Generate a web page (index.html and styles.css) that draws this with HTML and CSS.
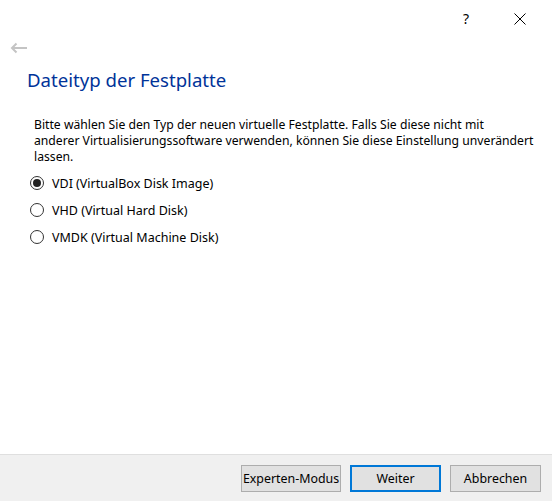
FILE: index.html
```html
<!DOCTYPE html>
<html lang="de">
<head>
<meta charset="utf-8">
<title>Dateityp der Festplatte</title>
<link rel="stylesheet" href="styles.css">
</head>
<body>
<div class="dialog">
  <div class="titlebar">
    <span class="help">?</span>
    <svg class="close" width="12" height="12" viewBox="0 0 12 12"><path d="M0.5 0.5 L11.5 11.5 M11.5 0.5 L0.5 11.5" stroke="#000" stroke-width="1" fill="none"/></svg>
  </div>
  <div class="backrow">
    <svg class="back" width="18" height="12" viewBox="0 0 18 12"><path d="M17 6 H2 M6.5 1.5 L2 6 L6.5 10.5" stroke="#c4c4c4" stroke-width="2" fill="none"/></svg>
  </div>
  <div class="content">
    <h1 class="title">Dateityp der Festplatte</h1>
    <p class="desc">Bitte wählen Sie den Typ der neuen virtuelle Festplatte. Falls Sie diese nicht mit<br>anderer Virtualisierungssoftware verwenden, können Sie diese Einstellung unverändert<br>lassen.</p>
    <div class="options">
      <label class="option"><span class="radio checked"></span>VDI (VirtualBox Disk Image)</label>
      <label class="option"><span class="radio"></span>VHD (Virtual Hard Disk)</label>
      <label class="option"><span class="radio"></span>VMDK (Virtual Machine Disk)</label>
    </div>
  </div>
  <div class="footer">
    <button class="btn wide">Experten-Modus</button>
    <button class="btn default">Weiter</button>
    <button class="btn">Abbrechen</button>
  </div>
</div>
</body>
</html>
```
FILE: styles.css
```css
html, body {
  margin: 0;
  padding: 0;
  background: #fff;
}
.dialog {
  width: 552px;
  height: 501px;
  display: flex;
  flex-direction: column;
  font-family: "Noto Sans", "Open Sans", sans-serif;
  font-size: 12.2px;
  color: #000;
}
.titlebar {
  height: 38px;
  display: flex;
  align-items: center;
  justify-content: flex-end;
  padding-right: 26px;
  gap: 45px;
}
.help {
  font-size: 14px;
  line-height: 14px;
  margin-top: -1px;
}
.close {
  display: block;
}
.backrow {
  height: 19px;
  padding-left: 10px;
  display: flex;
  align-items: center;
}
.back { display: block; }
.content {
  flex: 1;
  padding: 0 8px 0 27px;
}
.title {
  margin: 11px 0 0 0;
  font-size: 18.6px;
  font-weight: normal;
  color: #003399;
  line-height: 24px;
}
.desc {
  margin: 25px 0 0 7px;
  line-height: 16px;
  white-space: nowrap;
}
.options {
  margin: 8px 0 0 3px;
  display: flex;
  flex-direction: column;
  gap: 7px;
}
.option {
  display: flex;
  align-items: center;
  height: 20px;
  gap: 8px;
  font-size: 12.5px;
}
.radio {
  width: 14px;
  height: 14px;
  border: 1px solid #333;
  border-radius: 50%;
  box-sizing: border-box;
  display: flex;
  align-items: center;
  justify-content: center;
}
.radio.checked::after {
  content: "";
  width: 8px;
  height: 8px;
  border-radius: 50%;
  background: #222;
}
.footer {
  height: 46px;
  border-top: 1px solid #dfdfdf;
  background: #f0f0f0;
  display: flex;
  justify-content: flex-end;
  align-items: center;
  gap: 9px;
  padding-right: 11px;
}
.btn {
  font-family: "Noto Sans", "Open Sans", sans-serif;
  font-size: 12.4px;
  color: #000;
  background: #e1e1e1;
  border: 1px solid #adadad;
  height: 27px;
  width: 91px;
  padding: 0;
  margin: 0;
  box-sizing: border-box;
}
.btn.wide { width: 100px; }
.btn.default { border: 2px solid #0078d7; }
```
